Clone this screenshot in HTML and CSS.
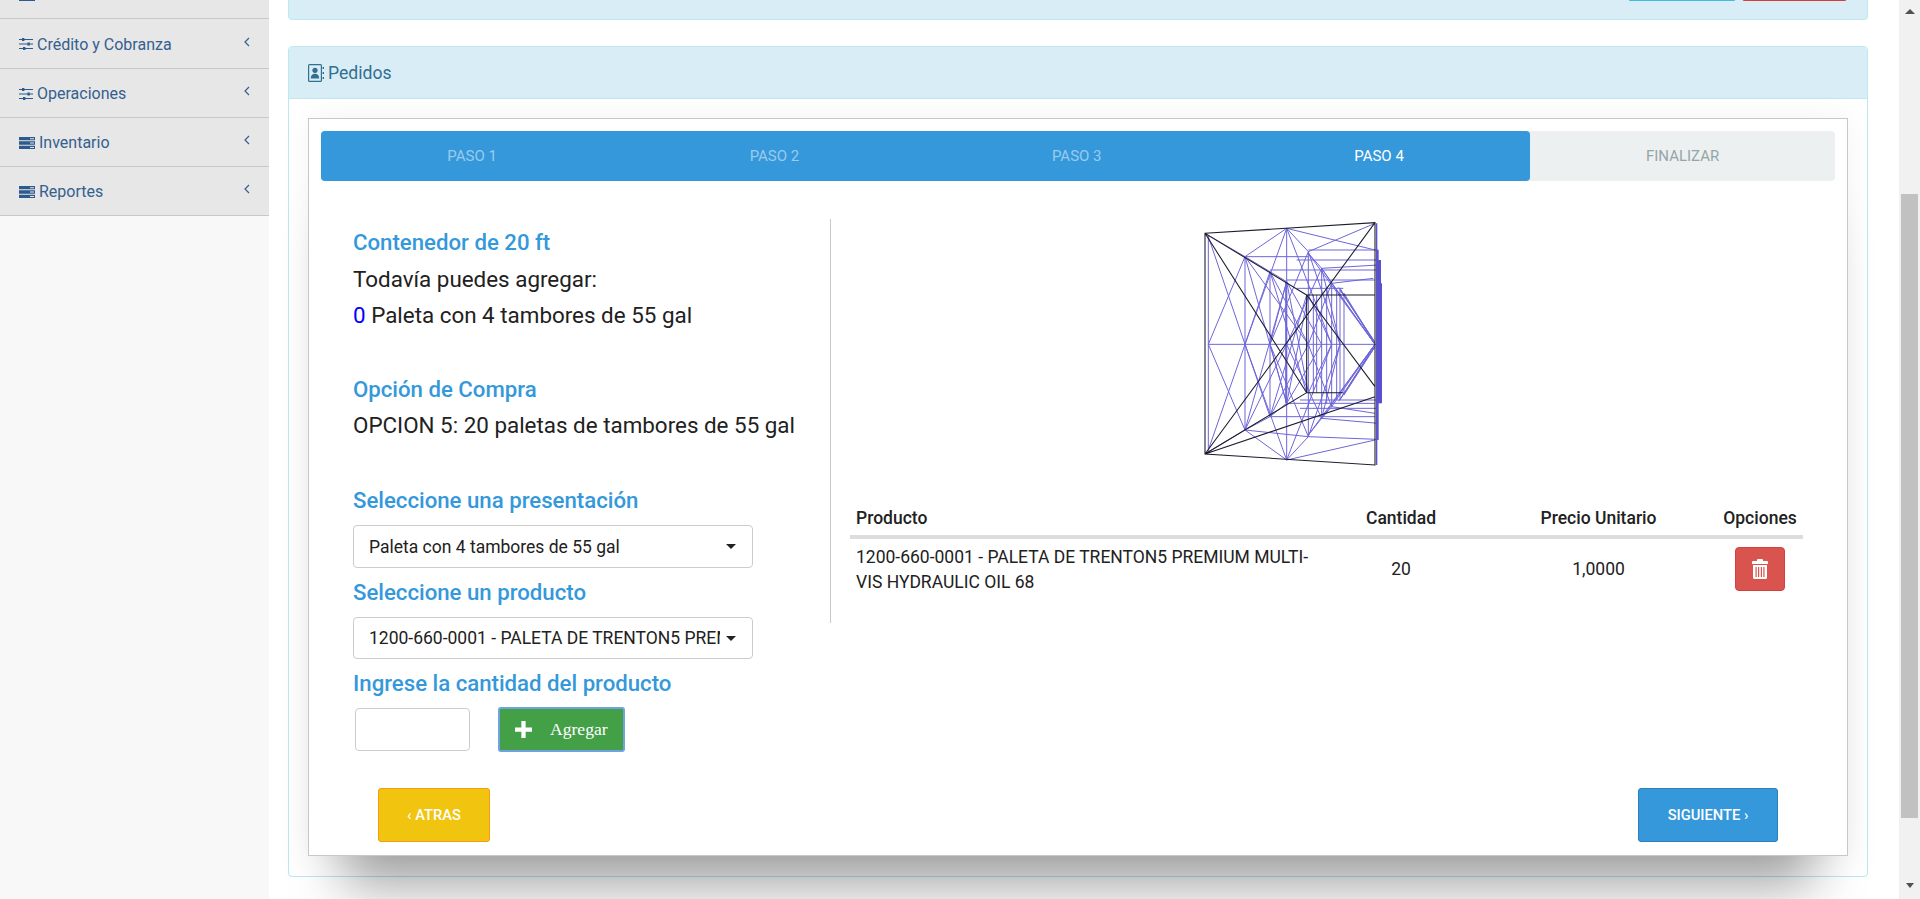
FILE: index.html
```html
<!DOCTYPE html>
<html lang="es">
<head>
<meta charset="utf-8">
<title>Pedidos</title>
<link rel="stylesheet" href="styles.css">
</head>
<body>
<aside class="sidebar">
  <nav class="menu">
    <a class="menu-item"><svg class="ic ic-srv" viewBox="0 0 16 12"><path d="M0 0h16v3.300H0zM0 4.300h16v3.400H0zM0 8.700h16V12H0z"/><path class="cut" d="M11 1.200h4v1h-4zM11 5.500h4v1h-4zM11 9.900h4v1h-4z"/></svg><span class="menu-label">Ventas</span><svg class="chev" viewBox="0 0 6 10"><path d="M5 1L1 5l4 4"/></svg></a>
    <a class="menu-item"><svg class="ic ic-sl" viewBox="0 0 14 12"><path d="M0 1h14v1.100H0zM0 5.500h14v1.100H0zM0 10h14v1.100H0z"/><path d="M3 0h2.400v3H3zM8.400 4.500h2.400v3H8.400zM4 9h2.400v3H4z"/></svg><span class="menu-label">Crédito y Cobranza</span><svg class="chev" viewBox="0 0 6 10"><path d="M5 1L1 5l4 4"/></svg></a>
    <a class="menu-item"><svg class="ic ic-sl" viewBox="0 0 14 12"><path d="M0 1h14v1.100H0zM0 5.500h14v1.100H0zM0 10h14v1.100H0z"/><path d="M3 0h2.400v3H3zM8.400 4.500h2.400v3H8.400zM4 9h2.400v3H4z"/></svg><span class="menu-label">Operaciones</span><svg class="chev" viewBox="0 0 6 10"><path d="M5 1L1 5l4 4"/></svg></a>
    <a class="menu-item"><svg class="ic ic-srv" viewBox="0 0 16 12"><path d="M0 0h16v3.300H0zM0 4.300h16v3.400H0zM0 8.700h16V12H0z"/><path class="cut" d="M11 1.200h4v1h-4zM11 5.500h4v1h-4zM11 9.900h4v1h-4z"/></svg><span class="menu-label">Inventario</span><svg class="chev" viewBox="0 0 6 10"><path d="M5 1L1 5l4 4"/></svg></a>
    <a class="menu-item"><svg class="ic ic-srv" viewBox="0 0 16 12"><path d="M0 0h16v3.300H0zM0 4.300h16v3.400H0zM0 8.700h16V12H0z"/><path class="cut" d="M11 1.200h4v1h-4zM11 5.500h4v1h-4zM11 9.900h4v1h-4z"/></svg><span class="menu-label">Reportes</span><svg class="chev" viewBox="0 0 6 10"><path d="M5 1L1 5l4 4"/></svg></a>
  </nav>
</aside>

<main class="content">
  <section class="panel-stub">
    <span class="stub-btn stub-info"></span>
    <span class="stub-btn stub-danger"></span>
  </section>

  <section class="panel">
    <header class="panel-head">
      <svg class="ic-book" viewBox="0 0 16 18"><path fill-rule="evenodd" d="M1.500 0h11A1.500 1.500 0 0 1 14 1.500v15a1.500 1.500 0 0 1-1.500 1.500h-11A1.500 1.500 0 0 1 0 16.500v-15A1.500 1.500 0 0 1 1.500 0zM1.200 1.200v15.600h11.600V1.200z"/><circle cx="7" cy="6.300" r="2.600"/><path d="M2.800 14.500c0-3.200 1.600-4.700 4.200-4.700s4.200 1.500 4.200 4.700zM14.600 3h1.400v2h-1.400zM14.600 8h1.400v2h-1.400zM14.600 13h1.400v2h-1.400z"/></svg>
      <span>Pedidos</span>
    </header>
    <div class="panel-body">
      <div class="wizard">
        <ol class="steps">
          <li class="step done">Paso 1</li>
          <li class="step done">Paso 2</li>
          <li class="step done">Paso 3</li>
          <li class="step current">Paso 4</li>
          <li class="step todo">Finalizar</li>
        </ol>

        <div class="wizard-row">
          <div class="form-col">
            <h3 class="title">Contenedor de 20 ft</h3>
            <p class="line first">Todavía puedes agregar:</p>
            <p class="line"><span class="count">0</span> Paleta con 4 tambores de 55 gal</p>

            <h3 class="title gap-a">Opción de Compra</h3>
            <p class="line second">OPCION 5: 20 paletas de tambores de 55 gal</p>

            <h3 class="title gap-b">Seleccione una presentación</h3>
            <div class="select"><span class="select-text">Paleta con 4 tambores de 55 gal</span><i class="caret"></i></div>
            <h3 class="title gap-c">Seleccione un producto</h3>
            <div class="select select-b"><span class="select-text">1200-660-0001 - PALETA DE TRENTON5 PREMIUM MULTI-VIS HYDRAULIC OIL 68</span><i class="caret"></i></div>
            <h3 class="title gap-c">Ingrese la cantidad del producto</h3>
            <div class="qty-row">
              <input class="qty" type="text" aria-label="Cantidad">
              <button class="add" type="button"><svg class="ic-plus" viewBox="0 0 16 16"><path d="M6 0h4v6h6v4h-6v6H6v-6H0V6h6z"/></svg><span>Agregar</span></button>
            </div>
          </div>

          <div class="divider"></div>

          <div class="result-col">
            <svg class="wire" viewBox="0 0 840 840">
              <path class="wire-blue" d="M205 105V755M315 170V690M390 215V650M440 85V780M440 245V610M437 245V610M505 155V710M545 205V655M575 250V620M600 265V600M612 280V585M520 285V578M530 285V578M560 260V610M590 265V600
              M205 433H705M315 170H505M505 150H715M390 210H715M440 240H705M470 265H610M440 610H705M390 650H705M315 690L505 710M505 710L710 718M545 205L715 195M545 655L715 670M575 250L700 235M575 620L705 640M480 600H710M480 625H710M470 180H715
              M440 85L315 170M440 85L505 155M505 155L705 70M440 85L705 150M315 170L390 215M390 215L440 245M315 690L390 650M390 650L440 610M440 780L505 710M440 780L705 720M440 780L315 690M195 100L315 170M195 762L315 690M505 160L545 205M505 705L545 655M545 205L575 250M545 655L575 620
              M205 433L315 170M205 433L315 690M315 433L440 85M315 433L390 215M315 433L390 650M315 433L440 780M205 110L315 433M205 750L315 433
              M390 433L505 155M390 433L440 245M390 433L440 610M390 433L505 710M390 215L505 433M390 650L505 433M315 170L505 433M315 690L440 433M440 245L545 433M440 610L545 433M505 155L600 433M505 710L600 433M440 433L545 205M440 433L545 655M505 433L575 250M505 433L575 620
              M440 85L575 433M440 780L575 433M505 160L705 433M505 705L705 433M545 205L705 433M545 655L705 433M575 250L705 433M575 620L705 433M600 265L705 433M600 600L705 433M612 280L705 430M612 585L705 440M600 270L700 420M605 590L700 445M596 262L704 425M596 604L704 442
              M505 285L575 433M505 578L575 433M545 205L600 433M545 655L600 433M440 245L505 578M440 610L505 285M390 215L500 578M390 650L500 285M315 170L440 610M315 690L440 245"/>
              <path class="wire-edge" d="M718 180V610"/>
              <path class="wire-edge-thin" d="M710 70V795M714 150V720M724 250V610"/>
              <path class="wire-black" d="M195 100L705 68V795L195 762ZM195 100L500 285M195 100L500 578M500 285L705 560M705 68L195 762M195 762L500 578M195 762L705 590M500 285H705M500 285V578M500 578H610"/>
            </svg>

            <table class="grid">
              <colgroup><col class="c-prod"><col class="c-qty"><col class="c-price"><col class="c-opt"></colgroup>
              <thead>
                <tr><th class="left">Producto</th><th>Cantidad</th><th>Precio Unitario</th><th>Opciones</th></tr>
              </thead>
              <tbody>
                <tr>
                  <td class="left">1200-660-0001 - PALETA DE TRENTON5 PREMIUM MULTI-VIS HYDRAULIC OIL 68</td>
                  <td>20</td>
                  <td>1,0000</td>
                  <td><button class="del" type="button" aria-label="Eliminar"><svg class="ic-trash" viewBox="0 0 16 20"><path fill-rule="evenodd" d="M6 0h4a1 1 0 0 1 1 1v1h4a1 1 0 0 1 1 1v2H0V3a1 1 0 0 1 1-1h4V1a1 1 0 0 1 1-1zM1 6h14v12.500a1.500 1.500 0 0 1-1.500 1.500h-11A1.500 1.500 0 0 1 1 18.500zM3.500 8v10h1.200V8zM6 8v10h1.200V8zM8.800 8v10H10V8zM11.300 8v10h1.200V8z"/></svg></button></td>
                </tr>
              </tbody>
            </table>
          </div>
        </div>

        <div class="wizard-nav">
          <button class="nav-btn back" type="button">‹ Atras</button>
          <button class="nav-btn next" type="button">Siguiente ›</button>
        </div>
      </div>
    </div>
  </section>
</main>

<div class="scrollbar">
  <i class="arrow-up"></i>
  <i class="thumb"></i>
  <i class="arrow-down"></i>
</div>
</body>
</html>
```

FILE: styles.css
```css
* { box-sizing: border-box; }

html, body {
  margin: 0;
  height: 899px;
  overflow: hidden;
}

body {
  display: flex;
  background: #fff;
  font-family: Roboto, "Liberation Sans", sans-serif;
  color: #212121;
}

/* Sidebar */
.sidebar {
  flex: 0 0 269px;
  background: #f8f8f8;
}

.menu {
  margin-top: -30px;
}

.menu-item {
  display: flex;
  align-items: center;
  height: 49px;
  padding: 1px 0 0 19px;
  background: #e7e7e7;
  border-bottom: 1px solid #c8c8c8;
  color: #34608f;
  font-size: 16px;
}

.menu-item:nth-child(2) { height: 50px; }

.ic { fill: #2c5a8c; flex: none; }
.ic-srv { width: 16px; height: 12px; margin-right: 4px; }
.ic-sl { width: 14px; height: 12px; margin-right: 4px; }
.cut { fill: #e7e7e7; }

.menu-label { flex: 1; }

.chev {
  flex: none;
  width: 6px;
  height: 10px;
  margin-right: 19px;
  margin-top: -5px;
  fill: none;
  stroke: #34608f;
  stroke-width: 1.2;
}

/* Main */
.content {
  flex: 1;
  min-width: 0;
  padding: 0 31px 0 19px;
}

.panel-stub {
  display: flex;
  justify-content: flex-end;
  gap: 6px;
  height: 50px;
  margin-top: -30px;
  padding: 0 20px 0 0;
  background: #d9edf7;
  border: 1px solid #bce8f1;
  border-radius: 0 0 4px 4px;
}

.stub-btn {
  height: 30px;
  border-radius: 3px;
  border-bottom: 1px solid;
}
.stub-info { width: 108px; background: #5bc0de; border-color: #46b8da; }
.stub-danger { width: 105px; background: #d9534f; border-color: #d43f3a; }

.panel {
  margin-top: 26px;
  border: 1px solid #bce8f1;
  border-radius: 4px;
}

.panel-head {
  display: flex;
  align-items: center;
  gap: 4px;
  height: 52px;
  padding-left: 19px;
  background: #d9edf7;
  border-bottom: 1px solid #bce8f1;
  border-radius: 3px 3px 0 0;
  color: #31708f;
  font-size: 17.6px;
}

.ic-book { width: 16px; height: 18px; fill: #31708f; }

.panel-body { padding: 19px 19px 20px; }

/* Wizard */
.wizard {
  padding: 12px 12px 13px;
  background: #fff;
  border: 1px solid #c8c8c8;
  box-shadow: 0 65px 50px -35px rgba(0, 0, 0, .36), 0 0 30px rgba(0, 0, 0, .05);
}

.steps {
  display: grid;
  grid-template-columns: repeat(4, 302.3px) 1fr;
  height: 50px;
  margin: 0;
  padding: 0;
  list-style: none;
  background: #ecf0f1;
  border-radius: 4px;
}

.step {
  display: flex;
  align-items: center;
  justify-content: center;
  background: #3498db;
  color: rgba(255, 255, 255, .5);
  font-size: 15px;
  text-transform: uppercase;
}
.step:first-child { border-radius: 4px 0 0 4px; }
.step.current { color: #fff; border-radius: 0 4px 4px 0; }
.step.todo { background: transparent; color: #95a5a6; }

.wizard-row {
  display: flex;
  align-items: flex-start;
  margin-top: 19px;
}

.form-col {
  flex: 0 0 509px;
  padding: 30px 0 0 32px;
}

.title {
  margin: 0;
  color: #3498db;
  font-size: 22.2px;
  font-weight: 500;
  line-height: 24px;
}

.line {
  margin: 0;
  font-size: 22.4px;
  line-height: 36px;
}
.line.first { margin-top: 7px; }
.line.second { margin-top: 6px; }
.count { color: #00f; }

.gap-a { margin-top: 44px; }
.gap-b { margin-top: 45px; }
.gap-c { margin-top: 12px; }

.select {
  display: flex;
  align-items: center;
  width: 400px;
  height: 43px;
  margin-top: 13px;
  padding: 0 16px 0 15px;
  background: #fff;
  border: 1px solid #ccc;
  border-radius: 4px;
  font-size: 17.5px;
}
.select-b { height: 42px; }

.select-text {
  flex: 1;
  min-width: 0;
  overflow: hidden;
  white-space: nowrap;
}

.caret {
  flex: none;
  margin-left: 6px;
  border-top: 5px solid #222;
  border-left: 5px solid transparent;
  border-right: 5px solid transparent;
}

.qty-row {
  display: flex;
  align-items: center;
  gap: 28px;
  margin: 12px 0 0 2px;
}

.qty {
  width: 115px;
  height: 43px;
  background: #fff;
  border: 1px solid #ccc;
  border-radius: 4px;
}

.add {
  display: flex;
  align-items: center;
  width: 127px;
  height: 45px;
  padding: 0 0 0 15px;
  background: #43a047;
  border: 2px solid #6fa3e0;
  border-radius: 3px;
  color: #fff;
  font-family: "Liberation Serif", serif;
  font-size: 17.6px;
}

.ic-plus { width: 17px; height: 17px; margin-right: 18px; fill: #fff; }

.divider {
  flex: none;
  width: 1px;
  height: 404px;
  margin-top: 19px;
  background: #c8c8c8;
}

.result-col {
  flex: 1;
  min-width: 0;
  padding-left: 19px;
}

.wire {
  display: block;
  width: 280px;
  height: 280px;
  margin-left: 290px;
}
.wire-blue { fill: none; stroke: #6d66d9; stroke-width: 3; }
.wire-edge { fill: none; stroke: #5a52cc; stroke-width: 10; }
.wire-edge-thin { fill: none; stroke: #5a52cc; stroke-width: 4; }
.wire-black { fill: none; stroke: #1c1c2c; stroke-width: 3.2; }

.grid {
  width: 953px;
  margin-top: 20px;
  border-collapse: separate;
  border-spacing: 0;
  table-layout: fixed;
  font-size: 17.5px;
  color: #212121;
}
.c-prod { width: 472px; }
.c-qty { width: 158px; }
.c-price { width: 237px; }
.c-opt { width: 86px; }

.grid th {
  height: 39px;
  padding: 0 6px;
  border-bottom: 4px solid #ddd;
  font-weight: 500;
  text-align: center;
  white-space: nowrap;
}

.grid td {
  padding: 5px 6px;
  line-height: 25px;
  text-align: center;
}

.grid .left { text-align: left; }
.grid td.left { padding: 6px 6px 4px; }

.del {
  display: inline-flex;
  align-items: center;
  justify-content: center;
  width: 50px;
  height: 44px;
  padding: 0;
  vertical-align: middle;
  background: #d9534f;
  border: 1px solid #d43f3a;
  border-radius: 4px;
}

.ic-trash { width: 16px; height: 20px; fill: #fff; }

.wizard-nav {
  display: flex;
  justify-content: space-between;
  margin-top: 36px;
  padding: 0 57px;
}

.nav-btn {
  height: 54px;
  padding: 0;
  border-radius: 3px;
  border: 1px solid;
  color: #fff;
  font-family: Roboto, sans-serif;
  font-size: 14.7px;
  font-weight: 500;
  text-transform: uppercase;
}
.back { width: 112px; background: #f1c40f; border-color: #f39c12; }
.next { width: 140px; background: #3498db; border-color: #2a80b9; }

/* Scrollbar */
.scrollbar {
  flex: 0 0 21px;
  display: flex;
  flex-direction: column;
  align-items: center;
  height: 899px;
  padding-top: 9px;
  background: #f1f1f1;
}

.arrow-up {
  border-bottom: 5px solid #505050;
  border-left: 5px solid transparent;
  border-right: 5px solid transparent;
}

.thumb {
  width: 17px;
  height: 624px;
  margin-top: 180px;
  background: #c1c1c1;
}

.arrow-down {
  margin-top: 65px;
  border-top: 5px solid #505050;
  border-left: 4px solid transparent;
  border-right: 4px solid transparent;
}
```
